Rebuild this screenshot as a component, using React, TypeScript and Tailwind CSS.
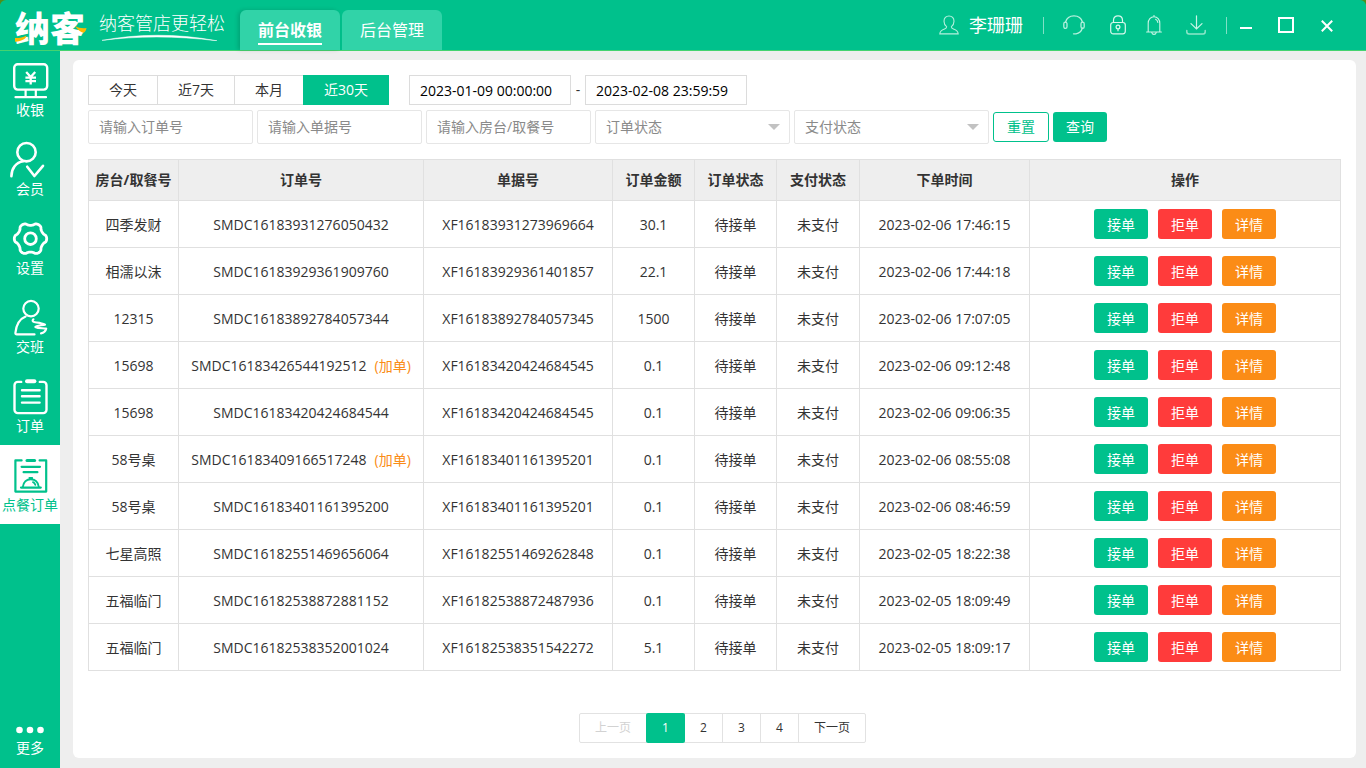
import type { ReactNode } from "react";

type Order = {
  room: string;
  order: string;
  added?: boolean;
  bill: string;
  amount: string;
  time: string;
};

const orders: Order[] = [
  { room: "四季发财", order: "SMDC16183931276050432", bill: "XF16183931273969664", amount: "30.1", time: "2023-02-06 17:46:15" },
  { room: "相濡以沫", order: "SMDC16183929361909760", bill: "XF16183929361401857", amount: "22.1", time: "2023-02-06 17:44:18" },
  { room: "12315", order: "SMDC16183892784057344", bill: "XF16183892784057345", amount: "1500", time: "2023-02-06 17:07:05" },
  { room: "15698", order: "SMDC16183426544192512", added: true, bill: "XF16183420424684545", amount: "0.1", time: "2023-02-06 09:12:48" },
  { room: "15698", order: "SMDC16183420424684544", bill: "XF16183420424684545", amount: "0.1", time: "2023-02-06 09:06:35" },
  { room: "58号桌", order: "SMDC16183409166517248", added: true, bill: "XF16183401161395201", amount: "0.1", time: "2023-02-06 08:55:08" },
  { room: "58号桌", order: "SMDC16183401161395200", bill: "XF16183401161395201", amount: "0.1", time: "2023-02-06 08:46:59" },
  { room: "七星高照", order: "SMDC16182551469656064", bill: "XF16182551469262848", amount: "0.1", time: "2023-02-05 18:22:38" },
  { room: "五福临门", order: "SMDC16182538872881152", bill: "XF16182538872487936", amount: "0.1", time: "2023-02-05 18:09:49" },
  { room: "五福临门", order: "SMDC16182538352001024", bill: "XF16182538351542272", amount: "5.1", time: "2023-02-05 18:09:17" },
];

const columns = [
  { title: "房台/取餐号", width: "w-[90px]" },
  { title: "订单号", width: "w-[245px]" },
  { title: "单据号", width: "w-[189px]" },
  { title: "订单金额", width: "w-[82px]" },
  { title: "订单状态", width: "w-[82px]" },
  { title: "支付状态", width: "w-[83px]" },
  { title: "下单时间", width: "w-[170px]" },
  { title: "操作", width: "" },
];

function gearPath(cx: number, cy: number) {
  const points: string[] = [];
  for (let i = 0; i < 120; i++) {
    const t = (i / 120) * Math.PI * 2;
    const wave = Math.cos(6 * t);
    const r = 14.8 + 1.4 * Math.sign(wave) * Math.pow(Math.abs(wave), 0.6);
    points.push(`${(cx + r * Math.cos(t)).toFixed(2)} ${(cy + r * Math.sin(t)).toFixed(2)}`);
  }
  return `M${points.join("L")}Z`;
}

function SideIcon({ children, width = 2.4 }: { children: ReactNode; width?: number }) {
  return (
    <svg
      className="size-9 overflow-visible"
      viewBox="0 0 36 36"
      fill="none"
      stroke="currentColor"
      strokeWidth={width}
      strokeLinecap="round"
      strokeLinejoin="round"
      aria-hidden="true"
    >
      {children}
    </svg>
  );
}

const sideItems: { label: string; icon: ReactNode }[] = [
  {
    label: "收银",
    icon: (
      <SideIcon>
        <rect x="2.2" y="2.2" width="33" height="25.4" rx="3.5" />
        <path d="M13.6 28v6.5M23.8 28v6.5M3.5 35.2h30.5" strokeWidth="2.2" />
        <path d="M14.2 10l4.500 5 4.500-5M18.700 15v7.500M13.400 15.600h10.600M13.400 19.200h10.600" strokeWidth="2.3" strokeLinecap="butt" />
      </SideIcon>
    ),
  },
  {
    label: "会员",
    icon: (
      <SideIcon width={2.6}>
        <circle cx="14.5" cy="11.2" r="9.2" />
        <path d="M-.6 35.3C-.6 27.6 4 21.4 11.2 20.3" />
        <path d="M15.2 25.7l7.2 9.3 8.6-10.2" />
      </SideIcon>
    ),
  },
  {
    label: "设置",
    icon: (
      <SideIcon width={2.8}>
        <path d={gearPath(18.5, 18.7)} />
        <circle cx="18.5" cy="18.7" r="5.8" />
      </SideIcon>
    ),
  },
  {
    label: "交班",
    icon: (
      <SideIcon width={2.2}>
        <circle cx="19" cy="9.6" r="7.7" />
        <path d="M22.500 35.400H4.800c-1 0-1.500-.6-1.400-1.600C4.300 26 7.600 20 13.600 17.600" />
        <path d="M21.400 20.300c-1.800 1.800-.2 2.900 3.200 3.200 3.200.3 6.200.8 8.400 2.200-3.200.4-7 .6-9.600 2.300 2.800 1.600 7.200 1 10.800 1.600-.6 2.800-2.600 4.400-5.200 4.800" />
      </SideIcon>
    ),
  },
  {
    label: "订单",
    icon: (
      <SideIcon>
        <path d="M9.2 3.9H5.8a3.300 3.300 0 0 0-3.300 3.300v24.600a3.300 3.300 0 0 0 3.300 3.300h25.400a3.300 3.300 0 0 0 3.300-3.300V7.200a3.300 3.300 0 0 0-3.300-3.300h-3.400" />
        <path d="M15 3.200h7.400" strokeWidth="4" />
        <path d="M10 12.200h17.600M10 18.300h17.600M10 24.600h17.600" />
      </SideIcon>
    ),
  },
  {
    label: "点餐订单",
    icon: (
      <SideIcon width={2.2}>
        <path d="M9.600 3.400H3.400v31.200h30.800V3.400h-6.600" />
        <path d="M15 3.400h7.600" strokeWidth="3" />
        <path d="M9.600 9.800h18.400M11.600 15.200h13.800M9 30.600h19.800" />
        <path d="M10.800 30c.6-4.800 3.800-7.800 8-7.800s7.400 3 8 7.800M17.400 21h2.800M21 25.200c1.200.5 1.900 1.400 2.300 2.600" strokeWidth="1.900" />
      </SideIcon>
    ),
  },
];

function Sidebar() {
  return (
    <nav className="flex w-[60px] shrink-0 flex-col bg-[#00c18c] text-white">
      {sideItems.map((item) => (
        <a
          key={item.label}
          href="#"
          className={
            item.label === "点餐订单"
              ? "flex h-[79px] flex-col items-center gap-0.5 whitespace-nowrap bg-white pt-3 text-sm leading-5 text-[#00c18c]"
              : "flex h-[79px] flex-col items-center gap-0.5 whitespace-nowrap pt-3 text-sm leading-5"
          }
        >
          {item.icon}
          {item.label}
        </a>
      ))}
      <a href="#" className="mt-auto flex flex-col items-center gap-1 pb-2.5 text-sm leading-5">
        <svg className="h-2 w-7" viewBox="0 0 28 8" fill="currentColor" aria-hidden="true">
          <circle cx="3.500" cy="4" r="3.300" />
          <circle cx="14" cy="4" r="3.300" />
          <circle cx="24.500" cy="4" r="3.300" />
        </svg>
        更多
      </a>
    </nav>
  );
}

function Header() {
  return (
    <div className="bg-[#4f8f1a]">
      <header className="relative flex h-[50px] items-stretch rounded-t-md bg-[#00c18c] text-white shadow-[0_1px_0_#45d370]">
        <div className="flex w-60 shrink-0 items-center pl-[15px]">
          <div className="relative w-[84px] pt-2 text-[35px] leading-9 font-black">
            纳客
            <svg className="absolute bottom-0 left-0 h-9 w-[72px] overflow-visible" viewBox="0 0 72 36" fill="#ffb900" aria-hidden="true">
              <path d="M0 27c4 .2 8-.6 11.500-2.600-.3 3-4 5.600-11.500 6.400z" />
              <path d="M60 15c3.500 2 7.500 2.600 11.500 2-.3 2.200-1.400 3.900-3 4.800-3-.8-6-3-8.500-6.800z" />
            </svg>
          </div>
          <div className="flex flex-col pt-1">
            <span className="text-lg leading-5 font-light whitespace-nowrap">纳客管店更轻松</span>
            <svg className="h-2 w-[120px]" viewBox="0 0 120 8" aria-hidden="true">
              <path d="M3 7.400C38 1 76 0 118 7.800 76 2.600 38 3 3 7.400z" fill="#fff" stroke="#fff" strokeWidth=".5" />
            </svg>
          </div>
        </div>
        <div className="flex items-end gap-0.5">
          <a href="#" className="flex h-10 w-[100px] justify-center rounded-t-md bg-[#31d3a8] pt-2 shadow-[-2px_0_4px_rgba(0,0,0,0.15)]">
            <span className="h-[27px] border-b-2 border-white text-base leading-6 font-bold">前台收银</span>
          </a>
          <a href="#" className="flex h-10 w-[100px] justify-center rounded-t-md bg-[#31d3a8] pt-2">
            <span className="text-base leading-6">后台管理</span>
          </a>
        </div>
        <div className="ml-auto flex items-center pr-[33px]">
          <button type="button" className="flex items-center gap-2.5 text-lg leading-6">
            <svg className="size-5" viewBox="0 0 20 20" fill="none" stroke="#b5f0dd" strokeWidth="1.100" aria-hidden="true">
              <path d="M7.600 11.600C5.800 10.300 5 8.500 5 6.200 5 3 7 1 10 1s5 2 5 5.200c0 2.300-.8 4.100-2.600 5.400-.2 1.500.6 1.800 2 2.300 3 1 4.700 2 4.800 5H.8c.1-3 1.800-4 4.800-5 1.400-.5 2.200-.8 2-2.300z" />
            </svg>
            李珊珊
          </button>
          <span className="mr-[19px] ml-5 h-[17px] w-px bg-white/50" />
          <button type="button" aria-label="客服" className="mr-[25px]">
            <svg className="block h-5 w-[22px]" viewBox="0 0 22 20" fill="none" stroke="#b5f0dd" strokeWidth="1.300" strokeLinecap="round" aria-hidden="true">
              <path d="M2.600 7C3.600 3.200 6.800.9 11 .9S18.400 3.200 19.400 7M19.400 13c-.9 3-3.300 5.300-6.400 5.800h-2.500" />
              <rect x=".8" y="7.200" width="3.200" height="6.200" rx="1.600" />
              <rect x="18" y="7.200" width="3.200" height="6.200" rx="1.600" />
            </svg>
          </button>
          <button type="button" aria-label="锁屏" className="mr-5">
            <svg className="block h-5 w-4" viewBox="0 0 16 20" fill="none" stroke="#d8f8ed" strokeWidth="1.200" aria-hidden="true">
              <path d="M3.500 7.500V5.200C3.500 2.600 5.300.8 8 .8s4.500 1.800 4.500 4.400v2.300" />
              <rect x=".7" y="7.500" width="14.600" height="11.300" rx="2.500" />
              <circle cx="8" cy="12" r="1.900" />
              <path d="M8 14v2.200" />
            </svg>
          </button>
          <button type="button" aria-label="通知" className="mr-6">
            <svg className="block h-5 w-4" viewBox="0 0 16 20" fill="none" stroke="#c8f5e6" strokeWidth="1.100" strokeLinecap="round" aria-hidden="true">
              <path d="M8 .4v1.200M2.200 16.800V8.200c0-3.700 2.400-6.500 5.800-6.500s5.800 2.800 5.800 6.500v8.600M.6 17h14.800M5.800 17.600c.3 1.200 1.100 1.800 2.200 1.800s1.900-.6 2.200-1.800M9.600 4.200c1.300.6 2 1.700 2.200 3.200" />
            </svg>
          </button>
          <button type="button" aria-label="下载" className="mr-5">
            <svg className="block size-5" viewBox="0 0 20 20" fill="none" stroke="#c8f5e6" strokeWidth="1.200" strokeLinecap="round" aria-hidden="true">
              <path d="M10.500.8v13M5 8.600l5.500 5.400L16 8.600" />
              <path d="M.8 15.600v1.200c0 1.500.8 2.200 2.200 2.200h14.200c1.300 0 2-.7 2-2.200v-1.200" stroke="#8ee6c9" strokeWidth="1.500" />
            </svg>
          </button>
          <span className="mr-[13px] h-[17px] w-px bg-white/50" />
          <button type="button" aria-label="最小化" className="mr-[26px]">
            <svg className="block h-4 w-3" viewBox="0 0 12 16" aria-hidden="true">
              <path d="M0 11h12" stroke="#fff" strokeWidth="2" />
            </svg>
          </button>
          <button type="button" aria-label="最大化" className="mr-[27px]">
            <svg className="block size-4" viewBox="0 0 16 16" aria-hidden="true">
              <path d="M1 1h14v14H1z" fill="none" stroke="#fff" strokeWidth="2" />
            </svg>
          </button>
          <button type="button" aria-label="关闭">
            <svg className="block h-4 w-3" viewBox="0 0 12 16" aria-hidden="true">
              <path d="M.8 3.800l10.400 10.400M11.200 3.800L.8 14.200" stroke="#fff" strokeWidth="2" />
            </svg>
          </button>
        </div>
      </header>
    </div>
  );
}

const ranges = ["今天", "近7天", "本月", "近30天"];

function StatusSelect({ label }: { label: string }) {
  return (
    <div className="relative">
      <select
        aria-label={label}
        defaultValue=""
        className="block h-[34px] w-[195px] appearance-none rounded-xs border border-[#e6e6e6] bg-white px-2.5 text-sm leading-5 text-[#8a8a8a]"
      >
        <option value="">{label}</option>
      </select>
      <svg className="pointer-events-none absolute top-3.5 right-2.5 h-1.5 w-3" viewBox="0 0 12 6" fill="#c2c2c2" aria-hidden="true">
        <path d="M0 0h12L6 6z" />
      </svg>
    </div>
  );
}

function Filters() {
  return (
    <form className="flex flex-col gap-[5px]">
      <div className="flex items-center">
        <div className="flex pl-px">
          {ranges.map((r) => (
            <button
              key={r}
              type="button"
              className={
                r === "近30天"
                  ? "-ml-px h-[30px] border border-[#00c18c] bg-[#00c18c] px-5 text-sm leading-5 text-white"
                  : "-ml-px h-[30px] border border-[#dcdcdc] bg-white px-5 text-sm leading-5 text-[#333]"
              }
            >
              {r}
            </button>
          ))}
        </div>
        <input
          aria-label="开始时间"
          defaultValue="2023-01-09 00:00:00"
          className="ml-5 h-[30px] w-[162px] border border-[#dcdcdc] px-2.5 text-sm leading-5 text-black"
        />
        <span className="w-3.5 text-center text-sm leading-5 text-[#333]">-</span>
        <input
          aria-label="结束时间"
          defaultValue="2023-02-08 23:59:59"
          className="h-[30px] w-[162px] border border-[#dcdcdc] px-2.5 text-sm leading-5 text-black"
        />
      </div>
      <div className="flex items-center gap-1">
        {["请输入订单号", "请输入单据号", "请输入房台/取餐号"].map((p) => (
          <input
            key={p}
            aria-label={p}
            placeholder={p}
            className="h-[34px] w-[165px] rounded-xs border border-[#e6e6e6] px-2.5 pb-0.5 text-sm leading-5 placeholder:text-[#8a8a8a]"
          />
        ))}
        <StatusSelect label="订单状态" />
        <StatusSelect label="支付状态" />
        <button type="reset" className="h-[30px] w-14 rounded-[3px] border border-[#00c18c] bg-white text-sm leading-5 text-[#00c18c]">
          重置
        </button>
        <button type="button" className="h-[30px] w-[54px] rounded-[3px] bg-[#00c18c] text-sm leading-5 text-white">
          查询
        </button>
      </div>
    </form>
  );
}

function OrderTable() {
  return (
    <table className="mt-[15px] w-full table-fixed border-collapse text-center text-sm leading-5 text-[#333]">
      <thead>
        <tr className="h-[41px] bg-[#eee]">
          {columns.map((c) => (
            <th key={c.title} scope="col" className={`${c.width} border border-[#e0e0e0] font-bold whitespace-nowrap`}>
              {c.title}
            </th>
          ))}
        </tr>
      </thead>
      <tbody>
        {orders.map((o) => (
          <tr key={o.order} className="h-[47px]">
            <td className="border border-[#e0e0e0] pt-0.5">{o.room}</td>
            <td className="border border-[#e0e0e0] pt-0.5 whitespace-nowrap">
              {o.order}
              {o.added && <span className="ml-2 text-[#fa8c16]">(加单)</span>}
            </td>
            <td className="border border-[#e0e0e0] pt-0.5">{o.bill}</td>
            <td className="border border-[#e0e0e0] pt-0.5">{o.amount}</td>
            <td className="border border-[#e0e0e0] pt-0.5">待接单</td>
            <td className="border border-[#e0e0e0] pt-0.5">未支付</td>
            <td className="border border-[#e0e0e0] pt-0.5 whitespace-nowrap">{o.time}</td>
            <td className="border border-[#e0e0e0]">
              <div className="flex justify-center gap-2.5 text-white">
                <button type="button" className="h-[30px] w-[54px] rounded-[3px] bg-[#00c18c] pt-0.5">接单</button>
                <button type="button" className="h-[30px] w-[54px] rounded-[3px] bg-[#ff3b3b] pt-0.5">拒单</button>
                <button type="button" className="h-[30px] w-[54px] rounded-[3px] bg-[#fb8c16] pt-0.5">详情</button>
              </div>
            </td>
          </tr>
        ))}
      </tbody>
    </table>
  );
}

function Pagination() {
  return (
    <nav aria-label="分页" className="mt-[42px] flex justify-center pl-4 text-xs leading-5 text-[#333]">
      <button type="button" disabled className="h-[30px] w-[68px] rounded-l-xs border border-[#e2e2e2] text-[#d2d2d2]">
        上一页
      </button>
      <button type="button" aria-current="page" className="relative -ml-px h-[30px] w-[39px] rounded-xs bg-[#00c18c] text-white">
        1
      </button>
      {["2", "3", "4"].map((n) => (
        <button key={n} type="button" className="-ml-px h-[30px] w-[39px] border border-[#e2e2e2]">
          {n}
        </button>
      ))}
      <button type="button" className="-ml-px h-[30px] w-[68px] rounded-r-xs border border-[#e2e2e2]">
        下一页
      </button>
    </nav>
  );
}

export default function App() {
  return (
    <div className="flex min-h-screen flex-col bg-[#eee] font-['Open_Sans','Noto_Sans_CJK_SC',sans-serif]">
      <Header />
      <div className="flex grow">
        <Sidebar />
        <main className="mt-2.5 mr-2.5 mb-2.5 ml-[13px] min-w-0 grow rounded-md bg-white p-[15px]">
          <Filters />
          <OrderTable />
          <Pagination />
        </main>
      </div>
    </div>
  );
}
